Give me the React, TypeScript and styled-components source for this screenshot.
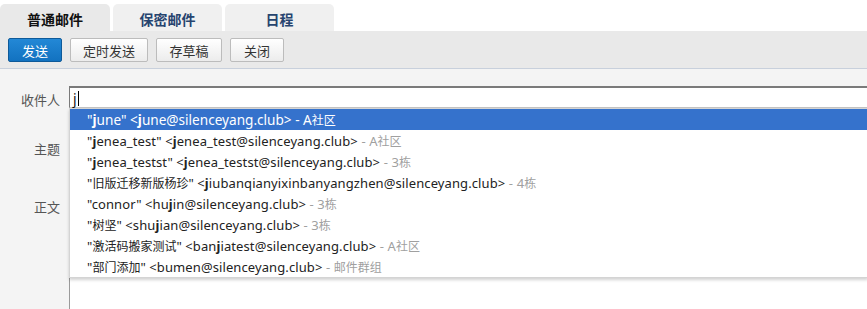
import React from "react";
import styled, { createGlobalStyle } from "styled-components";

const GlobalStyle = createGlobalStyle`
  html, body {
    margin: 0;
    padding: 0;
    background: #ffffff;
    font-family: "Noto Sans", "Noto Sans CJK SC", sans-serif;
    font-size: 13px;
    overflow: hidden;
  }
`;

const Page = styled.div`
  width: 867px;
  height: 309px;
  display: flex;
  flex-direction: column;
  overflow: hidden;
`;

const Tabs = styled.div`
  display: flex;
  gap: 3px;
  padding-top: 4px;
  background: #ffffff;
`;

const Tab = styled.div<{ $active?: boolean }>`
  width: ${(p) => (p.$active ? 110 : 109)}px;
  height: 27px;
  display: flex;
  align-items: center;
  justify-content: center;
  border-radius: 5px 5px 0 0;
  background: ${(p) => (p.$active ? "#e9e9e9" : "#f0f0f0")};
  color: ${(p) => (p.$active ? "#111111" : "#27446f")};
  font-family: "Noto Sans CJK SC", sans-serif;
  font-weight: bold;
  font-size: 14px;
  padding-top: 2px;
  box-sizing: border-box;
`;

const Toolbar = styled.div`
  height: 37px;
  background: #e9e9e9;
  border-bottom: 1px solid #c8d0dc;
  display: flex;
  align-items: center;
  gap: 8px;
  padding: 0 8px;
`;

const Button = styled.button<{ $primary?: boolean; $w: number }>`
  width: ${(p) => p.$w}px;
  height: 24px;
  margin-top: 1px;
  padding: 0;
  border-radius: 2px;
  font-family: "Noto Sans CJK SC", sans-serif;
  font-size: 13px;
  cursor: pointer;
  border: 1px solid ${(p) => (p.$primary ? "#0e5a99" : "#bcbcbc")};
  color: ${(p) => (p.$primary ? "#ffffff" : "#333333")};
  background: ${(p) =>
    p.$primary
      ? "linear-gradient(#2388d6, #1272c0)"
      : "linear-gradient(#ffffff, #ececec)"};
`;

const Form = styled.div`
  flex: 1;
  background: #f4f4f4;
  display: flex;
  flex-direction: column;
  padding-top: 17px;
`;

const Row = styled.div<{ $grow?: boolean; $mt?: number }>`
  display: flex;
  align-items: flex-start;
  margin-top: ${(p) => p.$mt ?? 0}px;
  ${(p) => (p.$grow ? "flex: 1;" : "")}
`;

const Label = styled.div<{ $pt?: number }>`
  width: 69px;
  flex: none;
  box-sizing: border-box;
  padding-right: 9px;
  padding-top: ${(p) => p.$pt ?? 4}px;
  text-align: right;
  color: #555555;
  font-family: "Noto Sans CJK SC", sans-serif;
  font-size: 13px;
`;

const Field = styled.div`
  position: relative;
  flex: 1;
  height: 22px;
  box-sizing: border-box;
  background: #ffffff;
  border-top: 2px solid #7a7a7a;
  border-left: 1px solid #7a7a7a;
  border-bottom: 1px solid #c4c4c4;
  padding: 1px 0 0 3px;
  font-size: 14px;
  color: #111;
  display: flex;
  align-items: center;
`;

const Caret = styled.span`
  display: inline-block;
  width: 1px;
  height: 15px;
  background: #000;
  margin-left: 1px;
`;

const Editor = styled.div`
  flex: 1;
  align-self: stretch;
  background: #ffffff;
  border-left: 1px solid #9a9a9a;
  border-top: 1px solid #c4c4c4;
`;

const Suggest = styled.ul`
  position: absolute;
  top: 20px;
  left: -1px;
  right: -1px;
  margin: 0;
  padding: 0;
  list-style: none;
  background: #ffffff;
  border: 1px solid #d4d4d4;
  box-shadow: 0 2px 3px rgba(0, 0, 0, 0.18);
  z-index: 5;
`;

const Item = styled.li<{ $active?: boolean }>`
  height: 21px;
  line-height: 21px;
  padding-left: 17px;
  white-space: nowrap;
  font-size: ${(p) => (p.$active ? 13.6 : 13)}px;
  letter-spacing: ${(p) => (p.$active ? 0 : 0.1)}px;
  color: ${(p) => (p.$active ? "#ffffff" : "#222222")};
  background: ${(p) => (p.$active ? "#3572cc" : "transparent")};
`;

const Hit = styled.b`
  font-weight: bold;
`;

const Cn = styled.span`
  font-family: "Noto Sans CJK SC", sans-serif;
  font-size: 12px;
  letter-spacing: 0;
`;

const Group = styled.span<{ $active?: boolean }>`
  color: ${(p) => (p.$active ? "#ffffff" : "#a0a0a0")};
`;

const contacts = [
  { name: "june", email: "june@silenceyang.club", group: "A社区" },
  { name: "jenea_test", email: "jenea_test@silenceyang.club", group: "A社区" },
  { name: "jenea_testst", email: "jenea_testst@silenceyang.club", group: "3栋" },
  { name: "旧版迁移新版杨珍", email: "jiubanqianyixinbanyangzhen@silenceyang.club", group: "4栋" },
  { name: "connor", email: "hujin@silenceyang.club", group: "3栋" },
  { name: "树坚", email: "shujian@silenceyang.club", group: "3栋" },
  { name: "激活码搬家测试", email: "banjiatest@silenceyang.club", group: "A社区" },
  { name: "部门添加", email: "bumen@silenceyang.club", group: "邮件群组" },
];

const isCn = (s: string) => /[\u4e00-\u9fff]/.test(s);

const mark = (s: string) => {
  if (isCn(s)) return <Cn>{s}</Cn>;
  const i = s.indexOf("j");
  if (i < 0) return s;
  return (
    <>
      {s.slice(0, i)}
      <Hit>j</Hit>
      {s.slice(i + 1)}
    </>
  );
};

const group = (g: string) => {
  const m = g.match(/^([A-Z0-9]*)(.*)$/);
  return (
    <>
      {m?.[1]}
      <Cn>{m?.[2]}</Cn>
    </>
  );
};

export default function App() {
  return (
    <>
      <GlobalStyle />
      <Page>
        <Tabs>
          <Tab $active>普通邮件</Tab>
          <Tab>保密邮件</Tab>
          <Tab>日程</Tab>
        </Tabs>
        <Toolbar>
          <Button $primary $w={54}>发送</Button>
          <Button $w={78}>定时发送</Button>
          <Button $w={66}>存草稿</Button>
          <Button $w={54}>关闭</Button>
        </Toolbar>
        <Form>
          <Row>
            <Label>收件人</Label>
            <Field>
              j<Caret />
              <Suggest>
                {contacts.map((c, i) => (
                  <Item key={c.email} $active={i === 0}>
                    "{mark(c.name)}" &lt;{mark(c.email)}&gt;{" "}
                    <Group $active={i === 0}>- {group(c.group)}</Group>
                  </Item>
                ))}
              </Suggest>
            </Field>
          </Row>
          <Row $mt={26}>
            <Label>主题</Label>
            <Field />
          </Row>
          <Row $grow $mt={35}>
            <Label>正文</Label>
            <Editor />
          </Row>
        </Form>
      </Page>
    </>
  );
}
